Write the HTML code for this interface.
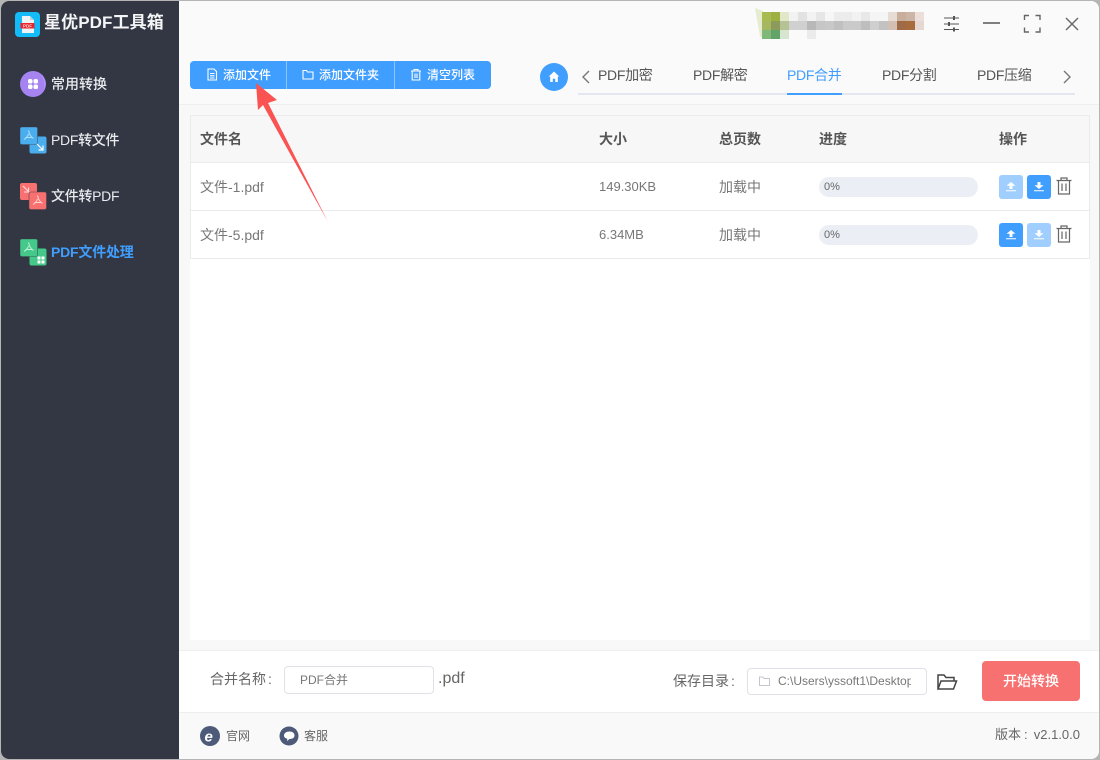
<!DOCTYPE html>
<html lang="zh"><head><meta charset="utf-8"><title>星优PDF工具箱</title>
<style>
html,body{margin:0;padding:0;width:1100px;height:760px;overflow:hidden;background:#b5b5b5}
*{box-sizing:border-box}
body{font-family:"Liberation Sans","Noto Sans CJK SC",sans-serif;position:relative}
.a,.t{position:absolute}
.t{white-space:nowrap;line-height:20px;height:20px}
#win{position:absolute;left:1px;top:1px;width:1098px;height:758px;border-radius:8px;overflow:hidden;background:#f9f9f9}
#c{position:absolute;left:-1px;top:-1px;width:1100px;height:760px}
.m{left:51px;color:#e9ebef;font-size:14px;font-weight:500}
.tab{top:65px;font-size:14px;color:#555;letter-spacing:-.3px}
.th{top:129px;font-size:14px;font-weight:700;color:#555}
.td{font-size:14px;color:#777}
.n{font-size:13px}
.bar{left:819px;width:159px;height:20px;border-radius:10px;background:#ebeef5;color:#666;font-size:11px;line-height:20px;padding-left:5px}
.b{width:24px;height:24px;border-radius:3px;background:#409eff}
.b.l{background:#a0cfff}
.tb{top:65px;font-size:12px;color:#fff;font-weight:500}
svg{display:block}
</style></head><body>
<div id="win"><div id="c">

<!-- top and panels -->
<div class="a" style="left:179px;top:0;width:921px;height:104px;background:#fafafa"></div>
<div class="a" style="left:179px;top:104px;width:921px;height:1px;background:#eeeeee"></div>
<div class="a" style="left:179px;top:105px;width:921px;height:545px;background:#f8f8f8"></div>
<div class="a" style="left:190px;top:115px;width:900px;height:525px;background:#fff"></div>
<div class="a" style="left:179px;top:650px;width:921px;height:63px;background:#fff;border-top:1px solid #eeeeee;border-bottom:1px solid #eeeeee"></div>
<div class="a" style="left:179px;top:713px;width:921px;height:47px;background:#f9f9f9"></div>

<!-- sidebar -->
<div class="a" style="left:0;top:0;width:179px;height:760px;background:#333743"></div>
<svg class="a" style="left:15px;top:12px" width="25" height="25" viewBox="0 0 25 25">
<rect width="25" height="25" rx="4" fill="#13bbf8"/>
<path d="M7 4h8l4 4v13H7z" fill="#eef3f6"/><path d="M15 4l4 4h-4z" fill="#b9d3df"/>
<rect x="5.500" y="11" width="14" height="5.500" fill="#e8262c"/>
<text x="8" y="15.500" font-size="4.500" fill="#ffd7d7" font-family="Liberation Sans" font-weight="700">PDF</text>
</svg>
<div class="t" style="left:44px;top:13px;font-size:17px;font-weight:700;color:#f4f5f7;letter-spacing:.1px">星优PDF工具箱</div>

<svg class="a" style="left:20px;top:71px" width="26" height="26" viewBox="0 0 26 26">
<circle cx="13" cy="13" r="13" fill="#a584f1"/><path d="M21 4a13 13 0 0 1 3 15a16 16 0 0 0-3-15z" fill="#c4aef6"/>
<rect x="8" y="8" width="4.500" height="4.500" rx="1.800" fill="#fff"/><rect x="13.500" y="8" width="4.500" height="4.500" rx="1.800" fill="#fff"/>
<rect x="8" y="13.500" width="4.500" height="4.500" rx="1.800" fill="#fff"/><rect x="13.500" y="13.500" width="4.500" height="4.500" rx="1.800" fill="#fff"/>
</svg>
<div class="t m" style="top:74px">常用转换</div>

<svg class="a" style="left:20px;top:127px" width="27" height="27" viewBox="0 0 27 27">
<rect x="9.500" y="9.500" width="17" height="17" rx="2" fill="#4aaeee"/>
<rect x="0" y="0" width="17.500" height="17.500" rx="2" fill="#4aaeee" stroke="#40566f" stroke-width=".6"/>
<path d="M8.500 3.500c1 4 2 6 5 8M8.500 7c-.7 2-2 4-4.500 5.500M5.500 10.500h6" stroke="#b5e0fa" fill="none" stroke-width="1"/>
<path d="M17 17l6 6M23 18.500V23h-4.500" stroke="#fff" fill="none" stroke-width="1.200"/>
</svg>
<div class="t m" style="top:130px;letter-spacing:-.3px">PDF转文件</div>

<svg class="a" style="left:20px;top:183px" width="27" height="27" viewBox="0 0 27 27">
<rect x="0" y="0" width="17" height="17" rx="2" fill="#f8706f"/>
<path d="M3 3l6 6M8.500 4.500V9H4" stroke="#ffdcdc" fill="none" stroke-width="1.100"/>
<rect x="9" y="9" width="17.500" height="17.500" rx="2" fill="#f8706f" stroke="#56414c" stroke-width=".6"/>
<path d="M17.500 12.500c1 4 2 6 5 8M17.500 16c-.7 2-2 4-4.500 5.500M14.500 19.500h6" stroke="#ffd5d5" fill="none" stroke-width="1"/>
</svg>
<div class="t m" style="top:186px;letter-spacing:-.3px">文件转PDF</div>

<svg class="a" style="left:20px;top:239px" width="27" height="27" viewBox="0 0 27 27">
<rect x="9.500" y="9.500" width="17" height="17" rx="2" fill="#44c98a"/>
<rect x="0" y="0" width="17.500" height="17.500" rx="2" fill="#44c98a" stroke="#3c5c58" stroke-width=".6"/>
<path d="M8.500 3.500c1 4 2 6 5 8M8.500 7c-.7 2-2 4-4.500 5.500M5.500 10.500h6" stroke="#c5f0da" fill="none" stroke-width="1"/>
<path d="M17.500 17.500h3v3h-3zM21.500 17.500h3v3h-3zM17.500 21.500h3v3h-3zM21.500 21.500h3v3h-3z" fill="#fff"/>
</svg>
<div class="t" style="left:51px;top:242px;font-size:14px;font-weight:700;color:#409eff;letter-spacing:-.2px">PDF文件处理</div>

<!-- mosaic -->
<svg class="a" style="left:755px;top:8px" width="8" height="30" viewBox="0 0 8 30"><path d="M0 0L8 3V30L5 28z" fill="#e6eccf"/></svg>
<svg class="a" style="left:762px;top:12px" width="162" height="27" viewBox="0 0 18 3" shape-rendering="crispEdges">
<g>
<rect x="0" y="0" width="1" height="1" fill="#a8bb50"/><rect x="1" y="0" width="1" height="1" fill="#9db040"/><rect x="2" y="0" width="1" height="1" fill="#e0e8c8"/><rect x="3" y="0" width="1" height="1" fill="#f2f2f2"/><rect x="4" y="0" width="1" height="1" fill="#e2e2e2"/><rect x="5" y="0" width="1" height="1" fill="#f2f2f2"/><rect x="6" y="0" width="1" height="1" fill="#e6e6e6"/><rect x="7" y="0" width="1" height="1" fill="#f6f6f6"/><rect x="8" y="0" width="1" height="1" fill="#ececec"/><rect x="9" y="0" width="1" height="1" fill="#ececec"/><rect x="10" y="0" width="1" height="1" fill="#f2f2f2"/><rect x="11" y="0" width="1" height="1" fill="#e8e8e8"/><rect x="12" y="0" width="1" height="1" fill="#f5f5f5"/><rect x="13" y="0" width="1" height="1" fill="#f5f5f5"/><rect x="14" y="0" width="1" height="1" fill="#e6dcd4"/><rect x="15" y="0" width="1" height="1" fill="#c9ae9c"/><rect x="16" y="0" width="1" height="1" fill="#cdb5a5"/><rect x="17" y="0" width="1" height="1" fill="#ecdfd9"/>
<rect x="0" y="1" width="1" height="1" fill="#a5b85f"/><rect x="1" y="1" width="1" height="1" fill="#8c9a5c"/><rect x="2" y="1" width="1" height="1" fill="#b4c294"/><rect x="3" y="1" width="1" height="1" fill="#d0d0d0"/><rect x="4" y="1" width="1" height="1" fill="#d0d0d0"/><rect x="5" y="1" width="1" height="1" fill="#b8b8b8"/><rect x="6" y="1" width="1" height="1" fill="#c6c6c6"/><rect x="7" y="1" width="1" height="1" fill="#c8c8c8"/><rect x="8" y="1" width="1" height="1" fill="#c0c0c0"/><rect x="9" y="1" width="1" height="1" fill="#cacaca"/><rect x="10" y="1" width="1" height="1" fill="#cacaca"/><rect x="11" y="1" width="1" height="1" fill="#bebebe"/><rect x="12" y="1" width="1" height="1" fill="#cfcfcf"/><rect x="13" y="1" width="1" height="1" fill="#c2c2c2"/><rect x="14" y="1" width="1" height="1" fill="#d3c0b2"/><rect x="15" y="1" width="1" height="1" fill="#9e6b46"/><rect x="16" y="1" width="1" height="1" fill="#a86b3c"/><rect x="17" y="1" width="1" height="1" fill="#e5d7d1"/>
<rect x="0" y="2" width="1" height="1" fill="#7fb87a"/><rect x="1" y="2" width="1" height="1" fill="#62a368"/><rect x="2" y="2" width="1" height="1" fill="#d6e4d0"/><rect x="5" y="2" width="1" height="1" fill="#ebebeb"/>
</g></svg>

<!-- window controls -->
<svg class="a" style="left:940px;top:12px" width="146" height="24" viewBox="0 0 146 24" fill="none" stroke="#555" stroke-width="1.400">
<path d="M4 6h15M4 12h15M4 17.500h15" stroke-width="1.100"/>
<path d="M14 4v4M9 10v4M14 15.500v4" stroke-width="2"/>
<path d="M43 11h17"/>
<path d="M84.500 8V3.500h4.500M95.500 3.500h4.500V8M100 15.500V20h-4.500M89 20h-4.500v-4.500" stroke="#666"/>
<path d="M126 6l12 12M138 6l-12 12" stroke="#666"/>
</svg>

<!-- toolbar -->
<div class="a" style="left:190px;top:61px;width:301px;height:28px;border-radius:4px;background:#409eff"></div>
<div class="a" style="left:286px;top:61px;width:1px;height:28px;background:#8fc4fb"></div>
<div class="a" style="left:394px;top:61px;width:1px;height:28px;background:#8fc4fb"></div>
<svg class="a" style="left:206px;top:68px" width="12" height="13" viewBox="0 0 12 13" fill="none" stroke="#fff" stroke-width="1.100"><path d="M2 1h6l2.500 2.500V12H2zM4 5.500h4.500M4 7.800h4.500M4 10h4.500"/></svg>
<div class="t tb" style="left:223px">添加文件</div>
<svg class="a" style="left:302px;top:69px" width="12" height="11" viewBox="0 0 12 11" fill="none" stroke="#fff" stroke-width="1.100"><path d="M1 1.500h3.500l1 1.500H11v7H1z"/></svg>
<div class="t tb" style="left:319px">添加文件夹</div>
<svg class="a" style="left:410px;top:68px" width="12" height="13" viewBox="0 0 12 13" fill="none" stroke="#fff" stroke-width="1.100"><path d="M1 3h10M4 3V1.500h4V3M2.200 3v9h7.600V3M5 5.500V10M7 5.500V10"/></svg>
<div class="t tb" style="left:427px">清空列表</div>

<!-- tabs -->
<svg class="a" style="left:540px;top:63px" width="28" height="28" viewBox="0 0 28 28"><circle cx="14" cy="14" r="14" fill="#409eff"/><path d="M14 8.500l5.200 5h-1.400V19h-2.600v-3.300h-2.400V19h-2.600v-5.500H8.800z" fill="#fff"/></svg>
<svg class="a" style="left:580px;top:69px" width="12" height="16" viewBox="0 0 12 16"><path d="M9 2L3 8l6 6" fill="none" stroke="#777" stroke-width="1.400"/></svg>
<svg class="a" style="left:1061px;top:69px" width="12" height="16" viewBox="0 0 12 16"><path d="M3 2l6 6-6 6" fill="none" stroke="#777" stroke-width="1.400"/></svg>
<div class="t tab" style="left:598px">PDF加密</div>
<div class="t tab" style="left:693px">PDF解密</div>
<div class="t tab" style="left:787px;color:#409eff">PDF合并</div>
<div class="t tab" style="left:882px">PDF分割</div>
<div class="t tab" style="left:977px">PDF压缩</div>
<div class="a" style="left:578px;top:93px;width:497px;height:2px;background:#e4e7f2"></div>
<div class="a" style="left:787px;top:93px;width:55px;height:2px;background:#409eff"></div>

<!-- table -->
<div class="a" style="left:190px;top:115px;width:900px;height:144px;border:1px solid #ebebeb;background:#fff"></div>
<div class="a" style="left:191px;top:116px;width:898px;height:46px;background:#f7f7f7"></div>
<div class="a" style="left:191px;top:162px;width:898px;height:1px;background:#ebebeb"></div>
<div class="a" style="left:191px;top:210px;width:898px;height:1px;background:#ebebeb"></div>
<div class="t th" style="left:200px">文件名</div>
<div class="t th" style="left:599px">大小</div>
<div class="t th" style="left:719px">总页数</div>
<div class="t th" style="left:819px">进度</div>
<div class="t th" style="left:999px">操作</div>

<div class="t td" style="left:200px;top:177px">文件-1.pdf</div>
<div class="t td n" style="left:599px;top:177px">149.30KB</div>
<div class="t td" style="left:719px;top:177px">加载中</div>
<div class="a bar" style="top:177px">0%</div>
<div class="a b l" style="left:999px;top:175px"><svg width="24" height="24" viewBox="0 0 24 24"><path d="M12 7l4.500 3.700h-3V14h-3v-3.300h-3zM7 15.200h10v1.100H7z" fill="#fff"/></svg></div>
<div class="a b" style="left:1027px;top:175px"><svg width="24" height="24" viewBox="0 0 24 24"><path d="M12 14l-4.500-3.700h3V7h3v3.300h3zM7 15.200h10v1.100H7z" fill="#fff"/></svg></div>
<svg class="a" style="left:1056px;top:177px" width="16" height="18" viewBox="0 0 16 18" fill="none" stroke="#666" stroke-width="1.200"><path d="M.5 3.500h15M5 3.500V1h6v2.500M2.500 3.500V17h11V3.500M6 6.500V14M10 6.500V14"/></svg>

<div class="t td" style="left:200px;top:225px">文件-5.pdf</div>
<div class="t td n" style="left:599px;top:225px">6.34MB</div>
<div class="t td" style="left:719px;top:225px">加载中</div>
<div class="a bar" style="top:225px">0%</div>
<div class="a b" style="left:999px;top:223px"><svg width="24" height="24" viewBox="0 0 24 24"><path d="M12 7l4.500 3.700h-3V14h-3v-3.300h-3zM7 15.200h10v1.100H7z" fill="#fff"/></svg></div>
<div class="a b l" style="left:1027px;top:223px"><svg width="24" height="24" viewBox="0 0 24 24"><path d="M12 14l-4.500-3.700h3V7h3v3.300h3zM7 15.200h10v1.100H7z" fill="#fff"/></svg></div>
<svg class="a" style="left:1056px;top:225px" width="16" height="18" viewBox="0 0 16 18" fill="none" stroke="#666" stroke-width="1.200"><path d="M.5 3.500h15M5 3.500V1h6v2.500M2.500 3.500V17h11V3.500M6 6.500V14M10 6.500V14"/></svg>

<!-- arrow -->
<svg class="a" style="left:0;top:0" width="400" height="240" viewBox="0 0 400 240"><path d="M256 83L277 100L268 103L328 222L263 105L258 110z" fill="#fb5252"/></svg>

<!-- footer form -->
<div class="t" style="left:210px;top:669px;font-size:14px;color:#666;letter-spacing:0">合并名称</div>
<div class="t" style="left:268px;top:669px;font-size:14px;color:#666">:</div>
<div class="a" style="left:284px;top:666px;width:150px;height:28px;border:1px solid #dfe1e8;border-radius:4px;background:#fff"></div>
<div class="t" style="left:300px;top:670px;font-size:12px;color:#777">PDF合并</div>
<div class="t" style="left:438px;top:669px;font-size:16px;color:#666">.pdf</div>
<div class="t" style="left:673px;top:671px;font-size:14px;color:#666">保存目录</div>
<div class="t" style="left:731px;top:671px;font-size:14px;color:#666">:</div>
<div class="a" style="left:747px;top:668px;width:180px;height:27px;border:1px solid #dfe1e8;border-radius:4px;background:#fff"></div>
<svg class="a" style="left:758px;top:675px" width="13" height="12" viewBox="0 0 13 12" fill="none" stroke="#c4c6cf"><path d="M1.500 2h3.500l1 1.500h5.500v7h-10z"/></svg>
<div class="t" style="left:778px;top:671px;width:133px;overflow:hidden;font-size:12px;color:#777">C:\Users\yssoft1\Desktop</div>
<svg class="a" style="left:936px;top:673px" width="22" height="18" viewBox="0 0 22 18" fill="none" stroke="#444" stroke-width="1.500"><path d="M2 16V2h6l2 2.500h8V8M2 16h15.500L20.500 8H5z"/></svg>
<div class="a" style="left:982px;top:661px;width:98px;height:40px;border-radius:4px;background:#f87171;color:#fff;font-size:14px;font-weight:500;text-align:center;line-height:40px">开始转换</div>

<!-- bottom -->
<svg class="a" style="left:200px;top:726px" width="20" height="20" viewBox="0 0 20 20"><circle cx="10" cy="10" r="10" fill="#4d5a78"/><text x="4.500" y="15.500" font-size="15" font-style="italic" font-weight="700" fill="#fff" font-family="Liberation Sans">e</text></svg>
<div class="t" style="left:226px;top:726px;font-size:12px;color:#666">官网</div>
<svg class="a" style="left:279px;top:726px" width="20" height="20" viewBox="0 0 20 20"><circle cx="10" cy="10" r="9.500" fill="#4d5a78"/><path d="M5 9.500C5 7 7.500 5.500 10.500 5.500S15.500 7 15.500 9.500 13 13 10.500 13l-2.500 2 .3-2.300C6.300 12.300 5 11.200 5 9.500z" fill="#fff"/></svg>
<div class="t" style="left:304px;top:726px;font-size:12px;color:#666">客服</div>
<div class="t" style="left:995px;top:725px;font-size:13px;color:#666">版本</div>
<div class="t" style="left:1024px;top:725px;font-size:13px;color:#666">:</div>
<div class="t" style="right:20px;top:725px;font-size:13px;color:#666">v2.1.0.0</div>

</div></div>
</body></html>
